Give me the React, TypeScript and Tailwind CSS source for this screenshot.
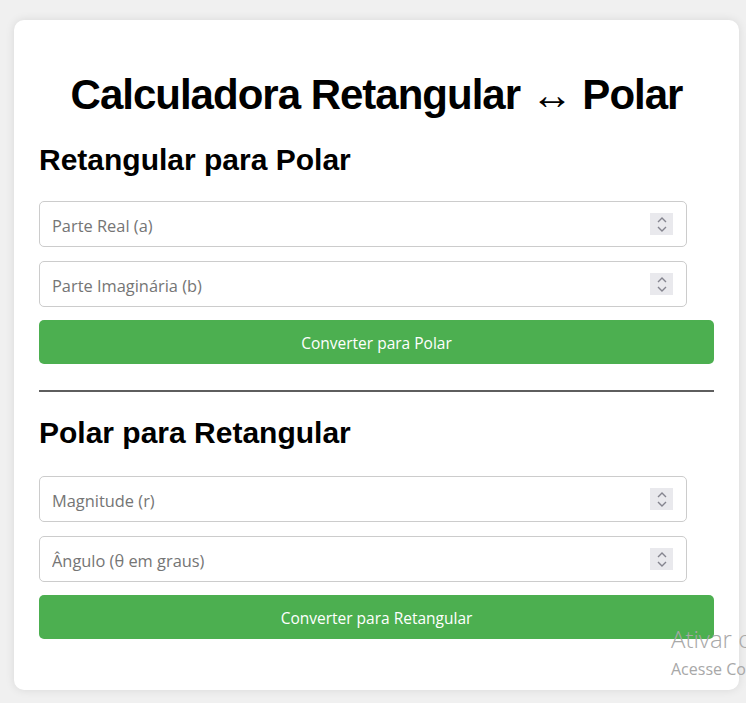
import React from "react";

function Spinner() {
  return (
    <div className="w-[23px] h-[22px] bg-[#e9e9ed] flex flex-col items-center justify-center gap-[3px] shrink-0">
      <svg width="10" height="6" viewBox="0 0 10 6" fill="none">
        <path d="M1 5 L5 1 L9 5" stroke="#85858f" strokeWidth="1.4" />
      </svg>
      <svg width="10" height="6" viewBox="0 0 10 6" fill="none">
        <path d="M1 1 L5 5 L9 1" stroke="#85858f" strokeWidth="1.4" />
      </svg>
    </div>
  );
}

function Field({ placeholder, className = "" }: { placeholder: string; className?: string }) {
  return (
    <div
      className={`w-[648px] h-[46px] border border-[#cccccc] rounded-[5px] bg-white flex items-center pl-[12px] pr-[13px] ${className}`}
    >
      <input
        type="text"
        placeholder={placeholder}
        className="flex-1 min-w-0 bg-transparent outline-none text-[16.4px] pt-[4px] text-[#222] placeholder:text-[#757575]"
        style={{ fontFamily: '"Open Sans", "Noto Sans", sans-serif' }}
      />
      <Spinner />
    </div>
  );
}

function Button({ label, className = "" }: { label: string; className?: string }) {
  return (
    <button
      className={`w-full h-[44px] rounded-[5px] bg-[#4caf50] text-white text-[15.5px] pt-[3px] flex items-center justify-center ${className}`}
      style={{ fontFamily: '"Open Sans", "Noto Sans", sans-serif' }}
    >
      {label}
    </button>
  );
}

export default function App() {
  return (
    <div className="relative w-[746px] h-[703px] overflow-hidden bg-[#f0f0f0] pt-[20px] pl-[14px]">
      <div
        className="w-[725px] h-[670px] bg-white rounded-[10px] shadow-[0_0_10px_rgba(0,0,0,0.1)] pt-[51px] px-[25px] flex flex-col"
        style={{ fontFamily: '"Liberation Sans", Arial, sans-serif' }}
      >
        <h1 className="h-[48px] leading-[48px] text-[42px] tracking-[-1px] font-bold text-center text-black whitespace-nowrap">
          Calculadora Retangular <span className="font-normal" style={{ fontFamily: '"Liberation Serif", serif' }}>↔</span> Polar
        </h1>
        <h2 className="mt-[25px] h-[32px] leading-[32px] text-[30px] font-bold text-black">
          Retangular para Polar
        </h2>
        <Field placeholder="Parte Real (a)" className="mt-[25px]" />
        <Field placeholder="Parte Imaginária (b)" className="mt-[14px]" />
        <Button label="Converter para Polar" className="mt-[13px]" />
        <div className="mt-[26px] h-[2px] bg-[#5e5e5e]" />
        <h2 className="mt-[25px] h-[32px] leading-[32px] text-[30px] font-bold text-black">
          Polar para Retangular
        </h2>
        <Field placeholder="Magnitude (r)" className="mt-[27px]" />
        <Field placeholder="Ângulo (θ em graus)" className="mt-[14px]" />
        <Button label="Converter para Retangular" className="mt-[13px]" />
      </div>
      <div
        className="absolute left-[671px] top-[624px] whitespace-nowrap text-[#a8a8a8] pointer-events-none"
        style={{ fontFamily: '"Open Sans", "Noto Sans", sans-serif' }}
      >
        <div className="text-[24px] leading-[30px] font-light">Ativar o Windows</div>
        <div className="text-[16px] leading-[20px] mt-[5px]">Acesse Configurações para ativar o Windows.</div>
      </div>
    </div>
  );
}
